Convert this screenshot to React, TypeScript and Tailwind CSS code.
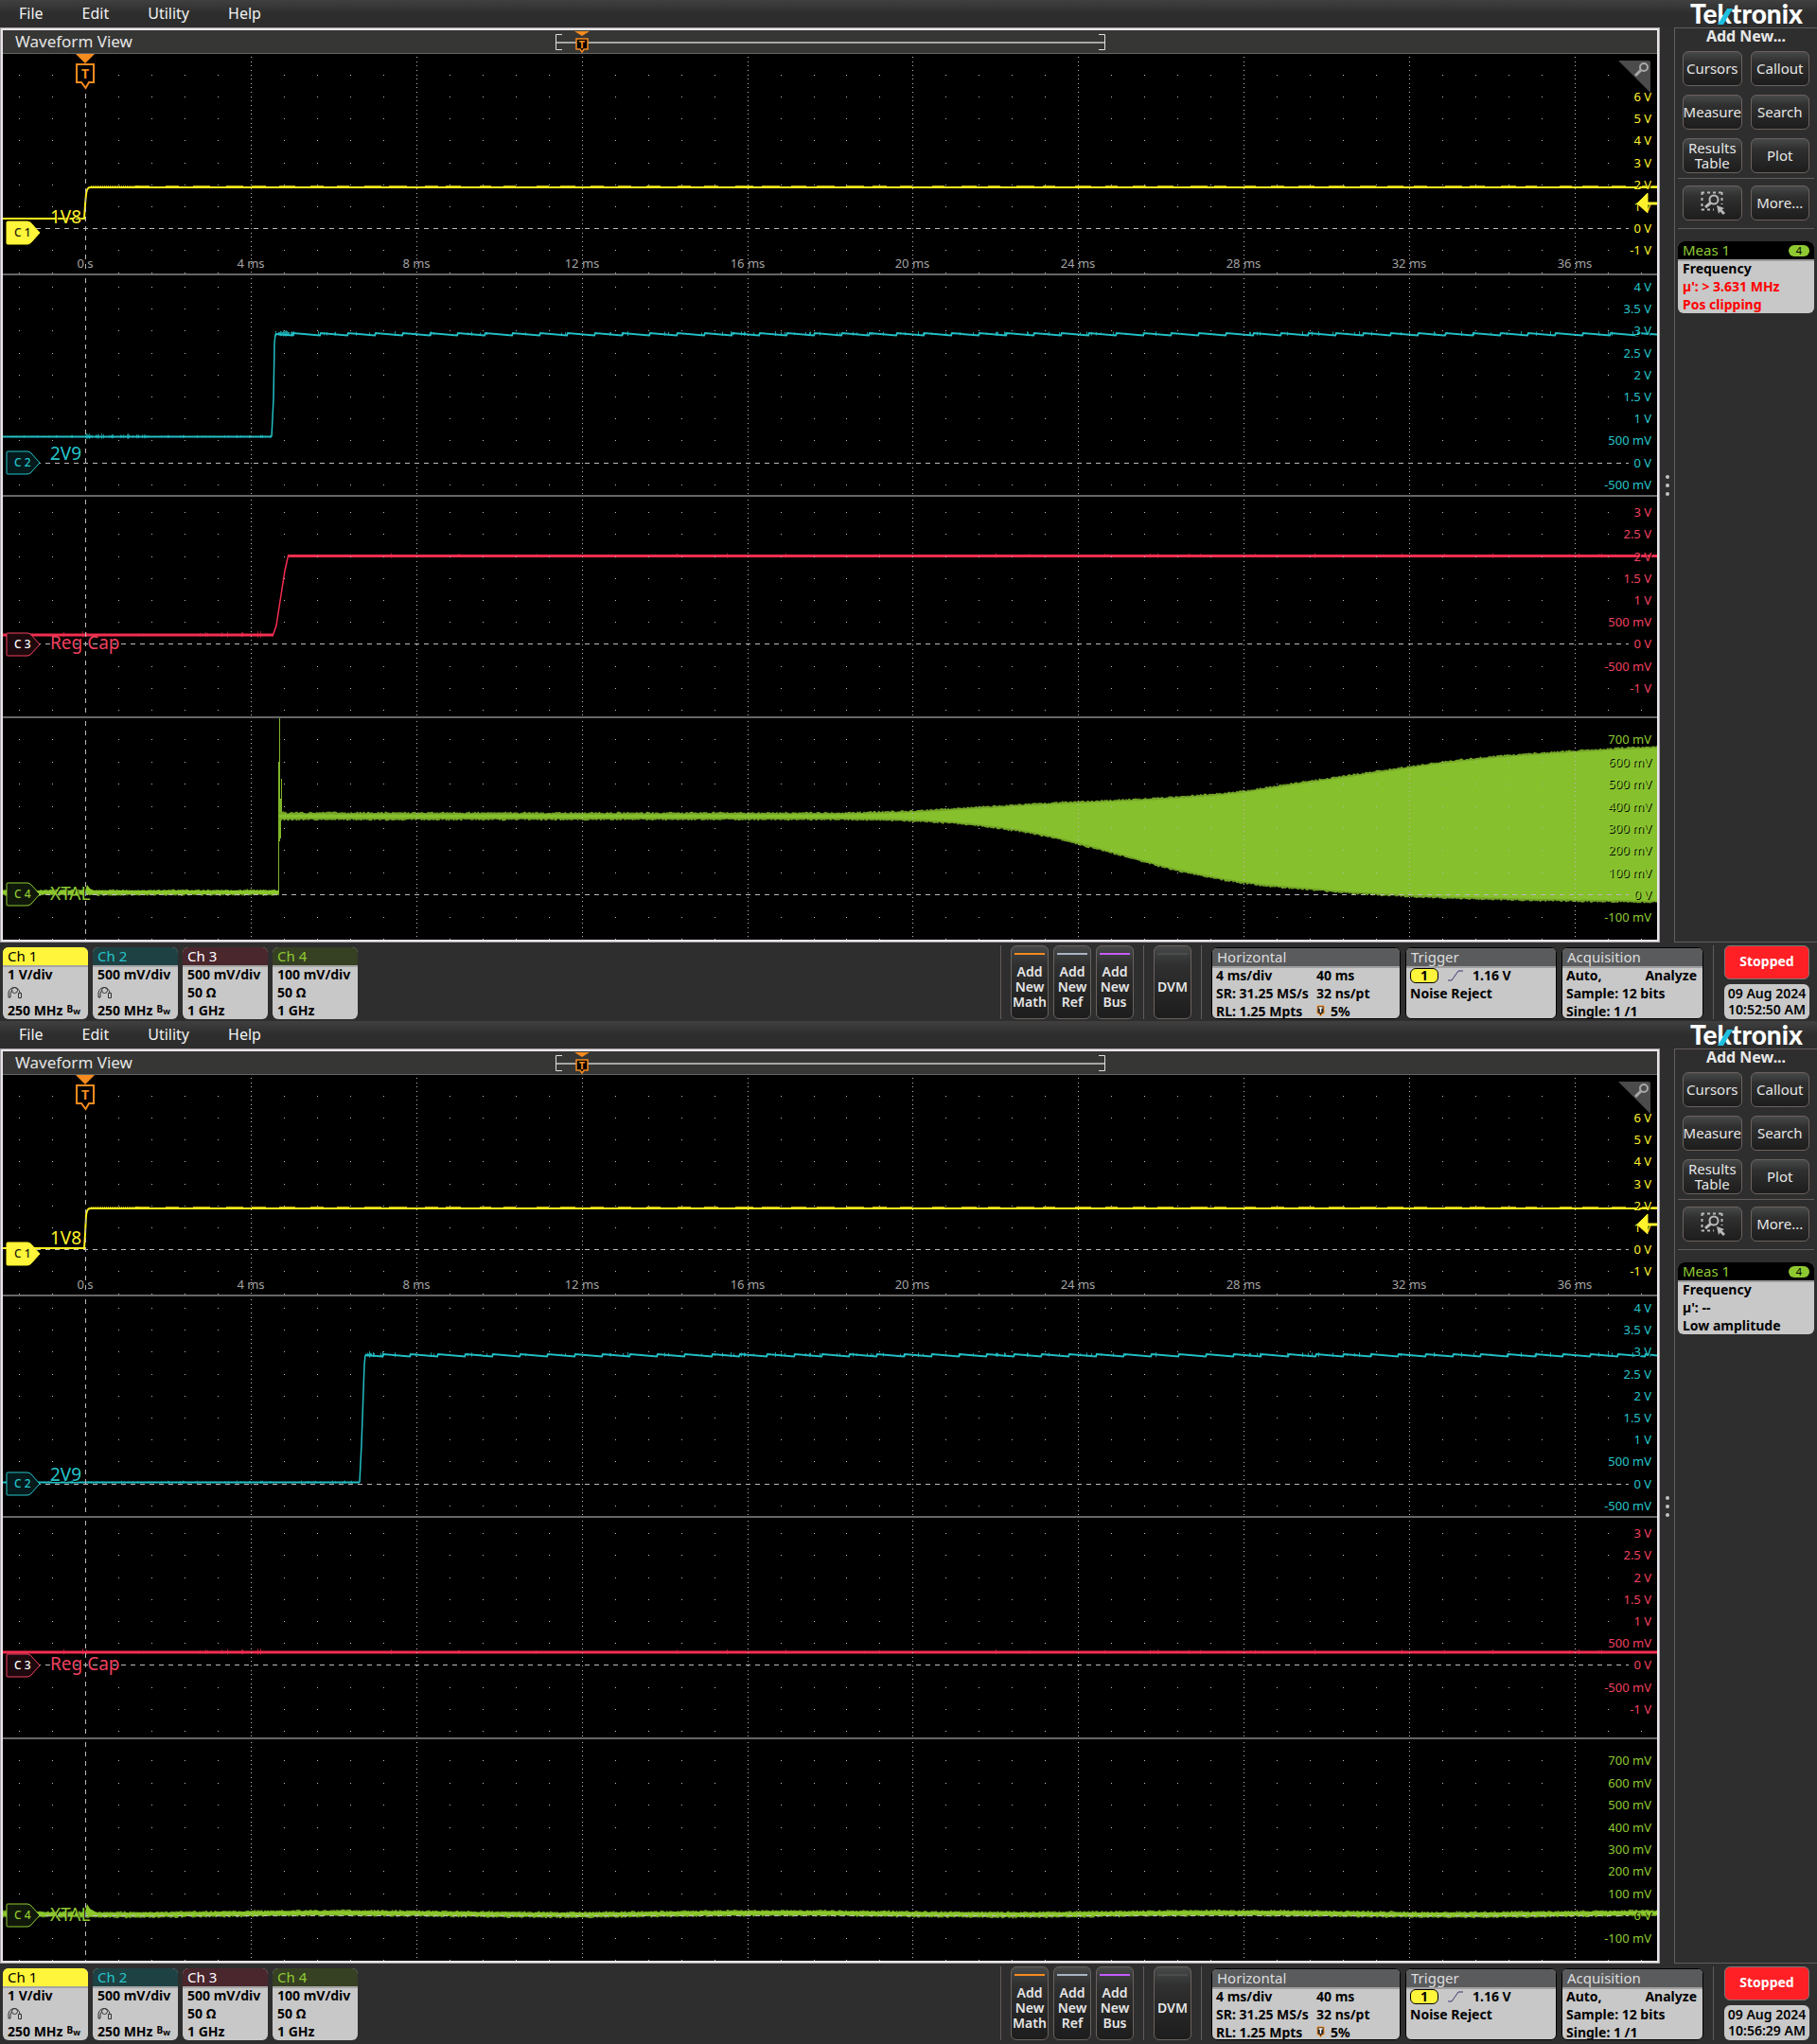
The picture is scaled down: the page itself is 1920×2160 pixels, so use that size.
import type { ReactNode } from 'react';

type Point = [number, number];

interface Slice {
  id: number;
  name: string;
  color: string;
  tagFill: string;
  tagText: string;
  height: number;
  zero: number;
  step: number;
  tagY: number;
  nameY: number;
  labels: string[];
  top: number;
}

interface Capture {
  time: string;
  measure: string[];
  alert: boolean;
  traces: ReactNode[];
}

const WIDTH = 1748;
const DIV_X = 34.96;
const ORIGIN_X = 87.4;

const SLICES: Slice[] = [
  { id: 1, name: '1V8', color: '#fff22d', tagFill: '#fff53a', tagText: '#1c1c10', height: 232, zero: 184.6, step: 23.2, tagY: 189, nameY: 179, top: 6, labels: ['6 V', '5 V', '4 V', '3 V', '2 V', '1 V', '0 V', '-1 V'] },
  { id: 2, name: '2V9', color: '#25c5ca', tagFill: '#04191b', tagText: '#25c5ca', height: 232, zero: 198, step: 23.2, tagY: 198, nameY: 195, top: 8, labels: ['4 V', '3.5 V', '3 V', '2.5 V', '2 V', '1.5 V', '1 V', '500 mV', '0 V', '-500 mV'] },
  { id: 3, name: 'Reg Cap', color: '#f0415f', tagFill: '#1d090d', tagText: '#ffffff', height: 232, zero: 155.9, step: 23.2, tagY: 156, nameY: 161, top: 6, labels: ['3 V', '2.5 V', '2 V', '1.5 V', '1 V', '500 mV', '0 V', '-500 mV', '-1 V'] },
  { id: 4, name: 'XTAL', color: '#8fc932', tagFill: '#10180a', tagText: '#8fc932', height: 234, zero: 186.6, step: 23.4, tagY: 186, nameY: 192, top: 7, labels: ['700 mV', '600 mV', '500 mV', '400 mV', '300 mV', '200 mV', '100 mV', '0 V', '-100 mV'] },
];

function noise(n: number) {
  const v = Math.sin(n * 127.1 + 311.7) * 43758.5453;
  return v - Math.floor(v);
}

function toPath(points: Point[]) {
  return 'M' + points.map(([x, y]) => `${x.toFixed(1)} ${y.toFixed(1)}`).join('L');
}

// smooth interpolation through a list of sampled points
function sample(points: Point[], x: number) {
  let i = 0;
  while (i < points.length - 2 && points[i + 1][0] < x) i++;
  const p0 = points[Math.max(0, i - 1)][1];
  const [x1, p1] = points[i];
  const [x2, p2] = points[i + 1];
  const p3 = points[Math.min(points.length - 1, i + 2)][1];
  const t = Math.max(0, Math.min(1, (x - x1) / (x2 - x1)));
  return 0.5 * (2 * p1 + (p2 - p0) * t + (2 * p0 - 5 * p1 + 4 * p2 - p3) * t * t + (3 * p1 - p0 - 3 * p2 + p3) * t * t * t);
}

function band(from: number, to: number, top: (x: number) => number, bottom: (x: number) => number, rough: number, seed: number) {
  const upper: Point[] = [];
  const lower: Point[] = [];
  for (let x = from; x <= to; x++) {
    upper.push([x, top(x) - noise(x + seed) * rough]);
    lower.push([x, bottom(x) + noise(x * 3 + seed) * rough]);
  }
  return toPath([...upper, ...lower.reverse()]) + 'Z';
}

function ticks(from: number, to: number, y: number, size: number, chance: number, seed: number) {
  let d = '';
  for (let x = from; x < to; x++) {
    if (noise(x * 7 + seed) < chance) {
      const h = size * (0.4 + noise(x + seed) * 0.6);
      d += `M${x + 0.5} ${(y - h).toFixed(1)}v${(h * 1.7).toFixed(1)}`;
    }
  }
  return d;
}

function StepTrace({ low }: { low: number }) {
  let caps = '';
  for (let x = 118; x < WIDTH; x += 30) {
    const start = x + 20 + noise(x) * 8;
    caps += `M${start.toFixed(0)} 139.5h${(12 + noise(x + 1) * 7).toFixed(0)}`;
  }
  return (
    <g fill="none" stroke="#fff01c">
      <path strokeWidth="2" d={`M0 ${low}H86L87 ${low - 15}L88 148Q89 141 92 141H${WIDTH}`} />
      <path strokeWidth="1" opacity="0.7" d={caps} />
      <path strokeWidth="1" opacity="0.7" strokeDasharray="1 1" d="M93 139.5H145" />
    </g>
  );
}

function RippleTrace({ low, rise, settle, glitch = 0 }: { low: number; rise: number; settle: number; glitch?: number }) {
  const points: Point[] = [[settle, 62]];
  for (let x = settle + 18; x < WIDTH; x += 29) {
    points.push([x, 63.5], [x + 1, 61]);
  }
  points.push([WIDTH, 62.5]);
  return (
    <g fill="none" stroke="#22bfc5">
      <path strokeWidth="2" d={`M0 ${low}H${rise}`} />
      <path strokeWidth="1.500" d={toPath([[rise, low], [rise + 2, low - 40], [settle - 1, 72], [settle, 62]])} />
      <path strokeWidth="2" d={toPath(points)} />
      <path strokeWidth="1" opacity="0.6" d={ticks(8, rise, low, 2, 0.15, 5) + ticks(87, 152, low, glitch, 0.4, 9)} />
      <path strokeWidth="1" opacity="0.8" d={ticks(settle, settle + 20, 62, 4, 0.7, 2) + ticks(settle + 20, WIDTH, 62, 3, 0.07, 4)} />
    </g>
  );
}

function CapTrace({ low, high }: { low: number; high?: number }) {
  return (
    <g fill="none" stroke="#f42e50">
      {high === undefined ? (
        <path strokeWidth="3" d={`M0 ${low}H${WIDTH}`} />
      ) : (
        <>
          <path strokeWidth="3" d={`M0 ${low}H286M301 ${high}H${WIDTH}`} />
          <path strokeWidth="1.500" d={`M285.500 ${low}L289 136L293 110L298 78L301.500 ${high}`} />
        </>
      )}
      <path strokeWidth="1" opacity="0.6" d={ticks(60, 280, low, 4, 0.06, 3) + ticks(305, WIDTH, high ?? low, 3, 0.03, 8)} />
    </g>
  );
}

const ENVELOPE_TOP: Point[] = [[292, 101.5], [880, 101.5], [960, 99.5], [1030, 95.5], [1099, 91.5], [1168, 88.5], [1237, 85], [1306, 79], [1374, 69], [1443, 59], [1512, 49], [1581, 41.5], [1650, 36.5], [1748, 31.5]];
const ENVELOPE_BOTTOM: Point[] = [[292, 105.5], [880, 105.5], [960, 107], [1030, 112], [1099, 122.5], [1168, 140], [1237, 158.5], [1306, 172], [1374, 179], [1443, 184.5], [1512, 188], [1581, 190], [1650, 191.5], [1748, 193]];

function CrystalTrace() {
  const top = (x: number) => sample(ENVELOPE_TOP, x);
  const bottom = (x: number) => sample(ENVELOPE_BOTTOM, x);
  return (
    <g>
      <path fill="#6f9f27" d={band(0, 292, () => 182.5, () => 186, 2, 14)} />
      <path fill="#8cc82c" d={band(0, 292, () => 182.5, () => 185.5, 1, 4)} />
      <path fill="#8cc82c" d="M87 182L89 176L92 180L98 183V186H87Z" />
      <path fill="none" stroke="#7fb52c" d="M291.5 46V186M292.5 0V130M294.5 64V108M293.5 85V127" />
      <path fill="#74a428" d={band(292, WIDTH, (x) => top(x) - 1, (x) => bottom(x) + 1, 2, 21)} />
      <path fill="#86c02d" d={band(292, WIDTH, (x) => top(x) + 0.5, (x) => bottom(x) - 0.5, 0.8, 33)} />
    </g>
  );
}

function QuietTrace() {
  const mid = (x: number) => 184.5 + Math.sin(x / 75) * 0.9;
  return (
    <g>
      <path fill="#6f9f27" d={band(0, WIDTH, (x) => mid(x) - 2, (x) => mid(x) + 2, 2, 6)} />
      <path fill="#8cc82c" d={band(0, WIDTH, (x) => mid(x) - 1.5, (x) => mid(x) + 1.5, 1, 40)} />
      <path fill="#8cc82c" d="M87 182L89 174L92 179L99 183V186H87Z" />
    </g>
  );
}

const CAPTURES: Capture[] = [
  {
    time: '10:52:50 AM',
    measure: ["µ': > 3.631 MHz", 'Pos clipping'],
    alert: true,
    traces: [<StepTrace key="1" low={174} />, <RippleTrace key="2" low={170.5} rise={284} settle={288} glitch={4} />, <CapTrace key="3" low={146} high={62.5} />, <CrystalTrace key="4" />],
  },
  {
    time: '10:56:29 AM',
    measure: ["µ': --", 'Low amplitude'],
    alert: false,
    traces: [<StepTrace key="1" low={183} />, <RippleTrace key="2" low={196.5} rise={377} settle={383} />, <CapTrace key="3" low={142} />, <QuietTrace key="4" />],
  },
];

function Graticule({ slice }: { slice: Slice }) {
  const { height, zero, step } = slice;
  const columns = Array.from({ length: 50 }, (_, i) => i - 2);
  const rows = Array.from({ length: 14 }, (_, i) => i - 4);
  let dots = '';
  columns.forEach((c) => {
    if (c % 5 === 0) return;
    const x = Math.round(ORIGIN_X + c * DIV_X);
    rows.forEach((n) => {
      const y = Math.floor(zero - n * step);
      const label = slice.labels[slice.top - n];
      const hidden = label !== undefined && x > 1734 - label.length * 7;
      if (n !== 0 && y > 10 && y < height && !hidden) dots += `M${x} ${y}h1v1h-1z`;
    });
  });
  const majors = Array.from({ length: 9 }, (_, i) => Math.round(ORIGIN_X + (i + 1) * 5 * DIV_X));
  const zeroY = Math.floor(zero) + 0.5;
  return (
    <g shapeRendering="crispEdges">
      <path d={dots} fill="#bdb8bd" />
      <path d={majors.map((x) => `M${x + 0.5} 3V${height}`).join('')} stroke="#bdb8bd" strokeDasharray="1 3.64" />
      <path d={`M87.5 ${slice.id === 1 ? 42 : 3}V${height}`} stroke="#bdb8bd" strokeDasharray="5 5" />
      <path d={`M35 ${zeroY}H1718`} stroke="#bdb8bd" strokeDasharray="5 5" />
    </g>
  );
}

function TriggerFlag() {
  return (
    <g>
      <path d="M77 0H97L87 10Z" fill="#f68b1f" />
      <path d="M78 11H96V30H91L87.500 36L83 30H78Z" fill="#000" stroke="#f68b1f" strokeWidth="2" />
      <text x="87" y="26" textAnchor="middle" fontSize="14" fontWeight="700" fill="#f68b1f">T</text>
    </g>
  );
}

function ChannelPlot({ slice, children }: { slice: Slice; children: ReactNode }) {
  const { tagY, color } = slice;
  return (
    <svg viewBox={`0 0 ${WIDTH} ${slice.height}`} className="block h-auto w-full box-content font-['Noto_Sans',sans-serif]" role="img" aria-label={`Channel ${slice.id} ${slice.name}`}>
      {children}
      <Graticule slice={slice} />
      {slice.id === 1 && (
        <g fontSize="13" fill="#a3a3a3" textAnchor="middle">
          {Array.from({ length: 10 }, (_, i) => (
            <text key={i} x={Math.round(ORIGIN_X + i * 5 * DIV_X)} y="226">{i === 0 ? '0 s' : `${i * 4} ms`}</text>
          ))}
        </g>
      )}
      <g fontSize="13" fill={color} textAnchor="end" className="[text-shadow:1px_1px_0_#000]">
        {slice.labels.map((label, i) => (
          <text key={label} x="1742" y={Math.floor(slice.zero - (slice.top - i) * slice.step) + 5}>{label}</text>
        ))}
      </g>
      <text x="50" y={slice.nameY} fontSize="19" fill={color} className="[text-shadow:1px_1px_0_#000]">{slice.name}</text>
      <path d={`M5 ${tagY - 12}H26Q28 ${tagY - 12} 30 ${tagY - 10}L39 ${tagY}L30 ${tagY + 10}Q28 ${tagY + 12} 26 ${tagY + 12}H5Q4 ${tagY + 12} 4 ${tagY + 11}V${tagY - 11}Q4 ${tagY - 12} 5 ${tagY - 12}Z`} fill={slice.tagFill} stroke={color} />
      <text x="12" y={tagY + 4} fontSize="12" fontWeight="500" fill={slice.tagText}>C {slice.id}</text>
      {slice.id === 1 && (
        <>
          <TriggerFlag />
          <path d="M1727 158L1738 147V157H1748V159H1738V168Z" fill="#fff22d" stroke="#fff22d" />
          <path d="M1707 7H1739Q1741 7 1741 9V41Z" fill="#4b4b4b" />
          <circle cx="1734" cy="14" r="4" fill="none" stroke="#a8a8a8" strokeWidth="2" />
          <path d="M1731 17L1725 23" stroke="#a8a8a8" strokeWidth="3" />
        </>
      )}
    </svg>
  );
}

function Minimap() {
  return (
    <svg viewBox="0 0 581 24" className="h-6 w-[581px] font-['Noto_Sans',sans-serif]" aria-hidden="true">
      <path d="M7 4.500H.500V20.500H7M574 4.500H580.500V20.500H574" fill="none" stroke="#e0e0e0" />
      <path d="M1 13H580" stroke="#a6a6a3" strokeWidth="2" />
      <path d="M20 1H36L28 6Z" fill="#f68b1f" />
      <path d="M22 9H34V20H30L28 23L26 20H22Z" fill="#000" stroke="#f68b1f" strokeWidth="1.500" />
      <text x="28" y="19" textAnchor="middle" fontSize="11" fontWeight="700" fill="#f68b1f">T</text>
    </svg>
  );
}

function Logo() {
  return (
    <svg viewBox="0 0 120 29" className="h-[29px] w-[120px] overflow-visible" role="img" aria-label="Tektronix logo">
      <text x="1" y="25" className="font-['Lato',sans-serif]" fontSize="28" fontWeight="900" fill="#fff">Tektronix</text>
      <path d="M30 26L40 9H46L36 26Z" fill="#1fbfe0" />
    </svg>
  );
}

function SideButton({ children, label }: { children: ReactNode; label?: string }) {
  return (
    <button aria-label={label} className="flex h-[37px] items-center justify-center rounded-md border border-[#6b625e] bg-linear-to-b from-[#474949] via-[#303030] via-30% to-[#1d1d1d] pb-0.5 text-[15px] leading-4 text-[#e6e6e6]">
      {children}
    </button>
  );
}

function ZoomSelectIcon() {
  return (
    <svg viewBox="0 0 28 28" className="size-7" fill="none" stroke="#b9b9b9" aria-hidden="true">
      <path d="M3 3.500H25M3 21.500H16" strokeWidth="2" strokeDasharray="3 3" />
      <path d="M3.500 3V22M24.500 3V16" strokeWidth="2" strokeDasharray="3 3" />
      <circle cx="16" cy="11" r="4.500" strokeWidth="2" />
      <path d="M13 14L7 19" strokeWidth="3" />
      <path d="M19 17L27 20L24.500 21.500L28 25L26 27L22.500 23.500L21 26Z" fill="#b9b9b9" stroke="none" />
    </svg>
  );
}

function SidePanel({ capture }: { capture: Capture }) {
  return (
    <aside className="flex h-[967px] w-[151px] shrink-0 flex-col border-y border-l border-[#625c5a] px-[3px]">
      <h2 className="-mt-0.5 mb-1.5 text-center text-[16px] leading-5 font-bold text-[#e8e8e8]">Add New...</h2>
      <div className="grid grid-cols-2 gap-x-[9px] gap-y-[9px] px-[5px] pb-[5px]">
        <SideButton>Cursors</SideButton>
        <SideButton>Callout</SideButton>
        <SideButton>Measure</SideButton>
        <SideButton>Search</SideButton>
        <SideButton>Results<br />Table</SideButton>
        <SideButton>Plot</SideButton>
      </div>
      <div className="grid grid-cols-2 gap-x-[9px] border-y border-[#625c5a] px-[5px] pt-[7px] pb-2">
        <SideButton label="Zoom"><ZoomSelectIcon /></SideButton>
        <SideButton>More...</SideButton>
      </div>
      <section className="mt-[13px] overflow-hidden rounded-md bg-[#c8c8c8] text-[14px] leading-[19px] font-bold text-black">
        <header className="flex h-[19px] items-center justify-between bg-black px-[5px] text-[15px] font-normal text-[#8fc932]">
          Meas 1
          <span className="w-[22px] rounded-md bg-[#8fc932] text-center text-[11px] leading-3 text-black">4</span>
        </header>
        <div className="border-t-2 border-[#9c9c9c] px-[5px]">
          <p className="-mt-0.5">Frequency</p>
          {capture.measure.map((line) => (
            <p key={line} className={capture.alert ? 'text-[#ff0000]' : ''}>{line}</p>
          ))}
        </div>
      </section>
    </aside>
  );
}

function ProbeIcon() {
  return (
    <svg viewBox="0 0 16 14" className="h-3.5 w-4" fill="none" stroke="#333" aria-hidden="true">
      <path d="M1 12V7Q2 2 7 1.500Q12 2 13 7M3 12V8Q4 5 5 4M1 12H3" />
      <circle cx="7.500" cy="4.500" r="3" />
      <path d="M11.500 7.500H14.500V12.500H11.500Z" />
    </svg>
  );
}

function ChannelBadge({ name, head, scale, mid, bandwidth, limited }: { name: string; head: string; scale: string; mid: ReactNode; bandwidth: string; limited?: boolean }) {
  return (
    <section className="h-[76px] w-[90px] shrink-0 overflow-hidden rounded-md bg-[#c8c8c8] text-[14px] leading-[19px] font-bold whitespace-nowrap text-black">
      <header className={`h-[19px] px-[5px] text-[15px] leading-[18px] font-normal ${head}`}>{name}</header>
      <div className="border-t-2 border-[#a5a5a5] px-[5px]">
        <p className="-mt-0.5">{scale}</p>
        <div className="flex h-[19px] items-center">{mid}</div>
        <p>{bandwidth}{limited && <span className="ml-1 align-[3px] text-[10px] leading-none">B<sub className="text-[9px]">w</sub></span>}</p>
      </div>
    </section>
  );
}

function SettingsCard({ title, width, children }: { title: string; width: string; children: ReactNode }) {
  return (
    <section className={`h-[76px] shrink-0 overflow-hidden rounded-md border border-black bg-[#c8c8c8] text-[14px] leading-[19px] font-bold whitespace-nowrap text-black ${width}`}>
      <header className="h-[19px] bg-[#5a5b5d] px-[5px] text-[15px] leading-[18px] font-normal text-[#dedede]">{title}</header>
      <div className="border-t-2 border-[#a0a0a0] px-1"><div className="-mt-0.5">{children}</div></div>
    </section>
  );
}

function AddButton({ bar, children }: { bar: string; children: ReactNode }) {
  return (
    <button className="flex h-[78px] w-10 shrink-0 flex-col items-center rounded-md border border-[#6b625e] bg-linear-to-b from-[#474949] via-[#303030] via-25% to-[#1d1d1d] pt-[7px] text-[14px] leading-4 font-semibold text-[#e6e6e6]">
      <span className={`h-0.5 w-8 shrink-0 ${bar}`} />
      <span className="flex flex-1 items-center">{children}</span>
    </button>
  );
}

function Divider({ className }: { className: string }) {
  return <div className={`h-[78px] w-px shrink-0 bg-[#625c5a] ${className}`} />;
}

function BottomBar({ time }: { time: string }) {
  return (
    <footer className="flex h-[83px] items-start justify-between pt-[3px] pr-2 pl-[3px]">
      <div className="flex gap-[5px] pt-0.5">
        <ChannelBadge name="Ch 1" head="bg-[#fff53a] text-black" scale="1 V/div" mid={<ProbeIcon />} bandwidth="250 MHz" limited />
        <ChannelBadge name="Ch 2" head="bg-[#1e4143] text-[#25c5ca]" scale="500 mV/div" mid={<ProbeIcon />} bandwidth="250 MHz" limited />
        <ChannelBadge name="Ch 3" head="bg-[#4a262d] text-white" scale="500 mV/div" mid="50 Ω" bandwidth="1 GHz" />
        <ChannelBadge name="Ch 4" head="bg-[#364022] text-[#8fc932]" scale="100 mV/div" mid="50 Ω" bandwidth="1 GHz" />
      </div>
      <div className="flex">
        <Divider className="mr-2.5" />
        <div className="flex gap-[5px]">
          <AddButton bar="bg-[#f68b1f]">Add<br />New<br />Math</AddButton>
          <AddButton bar="bg-[#a9b4c4]">Add<br />New<br />Ref</AddButton>
          <AddButton bar="bg-[#c45cff]">Add<br />New<br />Bus</AddButton>
        </div>
        <Divider className="mx-2.5" />
        <AddButton bar="bg-[#4b4d4d]">DVM</AddButton>
        <Divider className="mx-2.5" />
        <div className="flex gap-[5px] pt-0.5">
          <SettingsCard title="Horizontal" width="w-[200px]">
            <div className="grid grid-cols-[106px_1fr]">
              <span>4 ms/div</span>
              <span>40 ms</span>
              <span>SR: 31.25 MS/s</span>
              <span>32 ns/pt</span>
              <span>RL: 1.25 Mpts</span>
              <span className="flex items-center gap-1.5">
                <svg viewBox="0 0 9 13" className="h-[13px] w-[9px]" aria-hidden="true">
                  <path d="M1 1H8V9H6L4.500 12L3 9H1Z" fill="#222" stroke="#f68b1f" />
                  <path d="M2.500 3H6.500M4.500 3V8" stroke="#fff" strokeWidth="1.500" />
                </svg>
                5%
              </span>
            </div>
          </SettingsCard>
          <SettingsCard title="Trigger" width="w-40">
            <div className="flex h-[19px] items-center">
              <span className="h-4 w-[30px] rounded-md border border-black bg-[#fff53a] text-center leading-[14px]">1</span>
              <svg viewBox="0 0 16 12" className="ml-2.5 h-3 w-4" fill="none" stroke="#3b3674" aria-hidden="true">
                <path d="M0 11H4L11 1H16" />
              </svg>
              <span className="ml-2.5">1.16 V</span>
            </div>
            <p>Noise Reject</p>
          </SettingsCard>
          <SettingsCard title="Acquisition" width="w-[150px]">
            <p className="flex justify-between pr-0.5"><span>Auto,</span><span>Analyze</span></p>
            <p>Sample: 12 bits</p>
            <p>Single: 1 /1</p>
          </SettingsCard>
        </div>
        <Divider className="mr-[11px] ml-2.5" />
        <div className="flex w-[90px] flex-col gap-[5px]">
          <button className="h-9 rounded-md border border-[#777] bg-[#ff2026] pb-0.5 text-[14px] leading-4 font-bold text-white">Stopped</button>
          <p className="h-[37px] rounded-md bg-[#c8c8c8] pt-px text-center text-[14px] leading-[17px] font-semibold whitespace-nowrap text-black">09 Aug 2024<br />{time}</p>
        </div>
      </div>
    </footer>
  );
}

function Scope({ capture }: { capture: Capture }) {
  return (
    <div className="bg-[#2e2e2e]">
      <header className="flex h-[29px] justify-between bg-linear-to-b from-[#404040] to-[#2d2d2d] to-50% pr-[15px] pl-5">
        <nav className="flex gap-[41px] text-[16px] leading-[25px] text-[#f2f2f2]">
          <button>File</button>
          <button>Edit</button>
          <button>Utility</button>
          <button>Help</button>
        </nav>
        <Logo />
      </header>
      <div className="flex items-start">
        <main className="min-w-0 flex-1 border border-[#a9a4a9]">
          <div className="border-2 border-[#e9e6e9] bg-black">
            <div className="grid h-[25px] grid-cols-[1fr_581px_1fr] border-b border-[#626663] bg-[#363634]">
              <h1 className="pl-[13px] text-[17px] leading-6 text-[#e4e4e4]">Waveform View</h1>
              <Minimap />
            </div>
            <div className="divide-y-2 divide-[#666]">
              {SLICES.map((slice, i) => (
                <ChannelPlot key={slice.id} slice={slice}>{capture.traces[i]}</ChannelPlot>
              ))}
            </div>
          </div>
        </main>
        <div className="flex w-[15px] shrink-0 flex-col items-center gap-[5px] self-center" aria-hidden="true">
          <i className="size-1 rounded-full bg-[#c4c4c4]" />
          <i className="size-1 rounded-full bg-[#c4c4c4]" />
          <i className="size-1 rounded-full bg-[#c4c4c4]" />
        </div>
        <SidePanel capture={capture} />
      </div>
      <BottomBar time={capture.time} />
    </div>
  );
}

export default function App() {
  return (
    <div className="min-h-screen bg-[#2e2e2e] font-['Noto_Sans',sans-serif]">
      {CAPTURES.map((capture) => (
        <Scope key={capture.time} capture={capture} />
      ))}
    </div>
  );
}
